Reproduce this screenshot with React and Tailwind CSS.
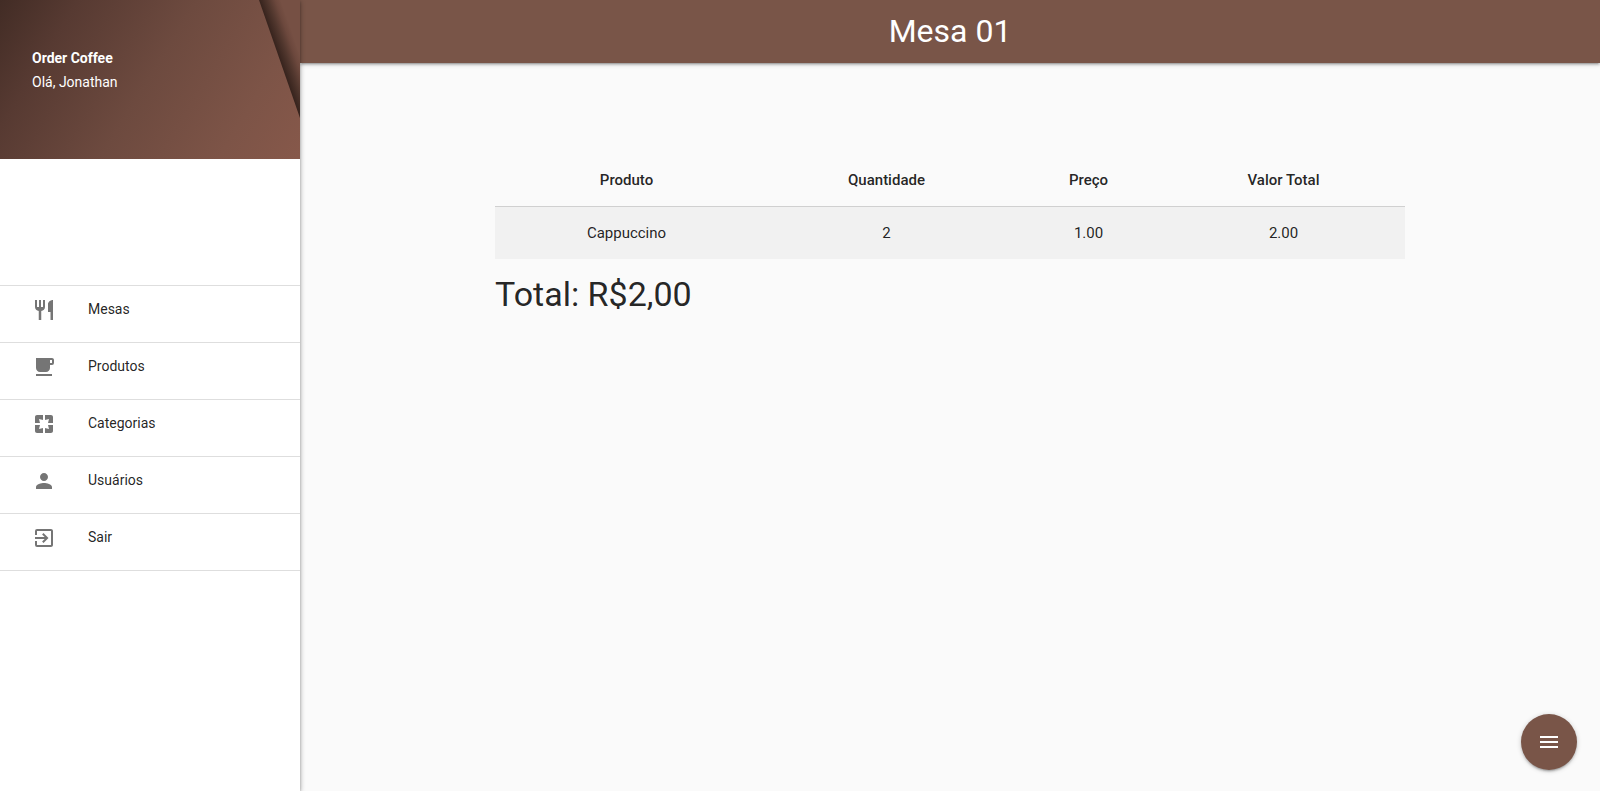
import {
  MdExitToApp,
  MdLocalCafe,
  MdMenu,
  MdPages,
  MdPerson,
  MdRestaurant,
} from "react-icons/md";

const links = [
  { label: "Mesas", Icon: MdRestaurant },
  { label: "Produtos", Icon: MdLocalCafe },
  { label: "Categorias", Icon: MdPages },
  { label: "Usuários", Icon: MdPerson },
  { label: "Sair", Icon: MdExitToApp },
];

const columns = [
  { label: "Produto", width: "w-[263px]" },
  { label: "Quantidade", width: "w-[257px]" },
  { label: "Preço", width: "w-[147px]" },
  { label: "Valor Total", width: "w-[243px]" },
];

const rows = [["Cappuccino", "2", "1.00", "2.00"]];

function UserBanner() {
  return (
    <div className="relative h-[159px] overflow-hidden">
      <svg
        className="absolute inset-0 h-full w-full"
        viewBox="0 0 300 159"
        preserveAspectRatio="none"
        aria-hidden="true"
      >
        <defs>
          <linearGradient id="panel" gradientUnits="userSpaceOnUse" x1="0" y1="0" x2="286" y2="176">
            <stop offset="0" stopColor="#422c25" />
            <stop offset="0.2" stopColor="#573a32" />
            <stop offset="0.5" stopColor="#6d4a3f" />
            <stop offset="0.8" stopColor="#7d5447" />
            <stop offset="1" stopColor="#86584a" />
          </linearGradient>
          <linearGradient id="fold" gradientUnits="userSpaceOnUse" x1="279" y1="59" x2="299" y2="52">
            <stop offset="0" stopColor="#35221c" />
            <stop offset="0.4" stopColor="#50362d" />
            <stop offset="0.75" stopColor="#6c483d" />
            <stop offset="1" stopColor="#765044" />
          </linearGradient>
        </defs>
        <rect width="300" height="159" fill="url(#panel)" />
        <path d="M259 0H300V118Z" fill="url(#fold)" />
      </svg>
      <div className="relative px-8 pt-[46px] text-sm leading-6 text-white">
        <p className="font-bold">Order Coffee</p>
        <p>Olá, Jonathan</p>
      </div>
    </div>
  );
}

function Sidebar() {
  return (
    <aside className="z-20 w-[300px] shrink-0 bg-white shadow-[0_2px_2px_0_rgba(0,0,0,0.14),0_3px_1px_-2px_rgba(0,0,0,0.12),0_1px_5px_0_rgba(0,0,0,0.4)]">
      <UserBanner />
      <nav className="mt-[126px] border-t border-[#dedede]">
        <ul>
          {links.map(({ label, Icon }) => (
            <li key={label} className="border-b border-[#dedede]">
              <a
                href="#"
                className="flex h-14 items-start gap-8 px-8 text-sm leading-[46px] font-normal text-black/87"
              >
                <span className="flex h-12 items-center">
                  <Icon className="size-6 text-black/54" />
                </span>
                {label}
              </a>
            </li>
          ))}
        </ul>
      </nav>
    </aside>
  );
}

export default function App() {
  return (
    <div className="flex min-h-screen bg-[#fafafa] font-[Roboto,sans-serif] text-[15px] text-black/87">
      <Sidebar />
      <div className="min-w-0 flex-1">
        <header className="bg-[#795548] shadow-[0_2px_2px_0_rgba(0,0,0,0.14),0_3px_1px_-2px_rgba(0,0,0,0.12),0_1px_5px_0_rgba(0,0,0,0.2)]">
          <h1 className="text-center text-[32px] leading-[63px] font-normal text-white">Mesa 01</h1>
        </header>
        <main className="mx-auto w-[70%] pt-[91px]">
          <table className="w-full table-fixed border-collapse text-center leading-[22px]">
            <thead>
              <tr className="border-b border-[#d0d0d0]">
                {columns.map(({ label, width }) => (
                  <th key={label} scope="col" className={`${width} py-[15px] font-medium`}>
                    {label}
                  </th>
                ))}
              </tr>
            </thead>
            <tbody>
              {rows.map((cells) => (
                <tr key={cells[0]} className="bg-[#f1f1f1]">
                  {cells.map((cell, i) => (
                    <td key={columns[i].label} className="py-[15px] font-normal">
                      {cell}
                    </td>
                  ))}
                </tr>
              ))}
            </tbody>
          </table>
          <h2 className="mt-4 text-[34px] leading-[38px] font-normal">Total: R$2,00</h2>
        </main>
      </div>
      <button
        type="button"
        aria-label="Menu"
        className="fixed right-[23px] bottom-[21px] z-30 flex size-14 items-center justify-center rounded-full bg-[#795548] text-white shadow-[0_2px_2px_0_rgba(0,0,0,0.14),0_3px_1px_-2px_rgba(0,0,0,0.12),0_1px_5px_0_rgba(0,0,0,0.2)]"
      >
        <MdMenu className="size-6" />
      </button>
    </div>
  );
}
